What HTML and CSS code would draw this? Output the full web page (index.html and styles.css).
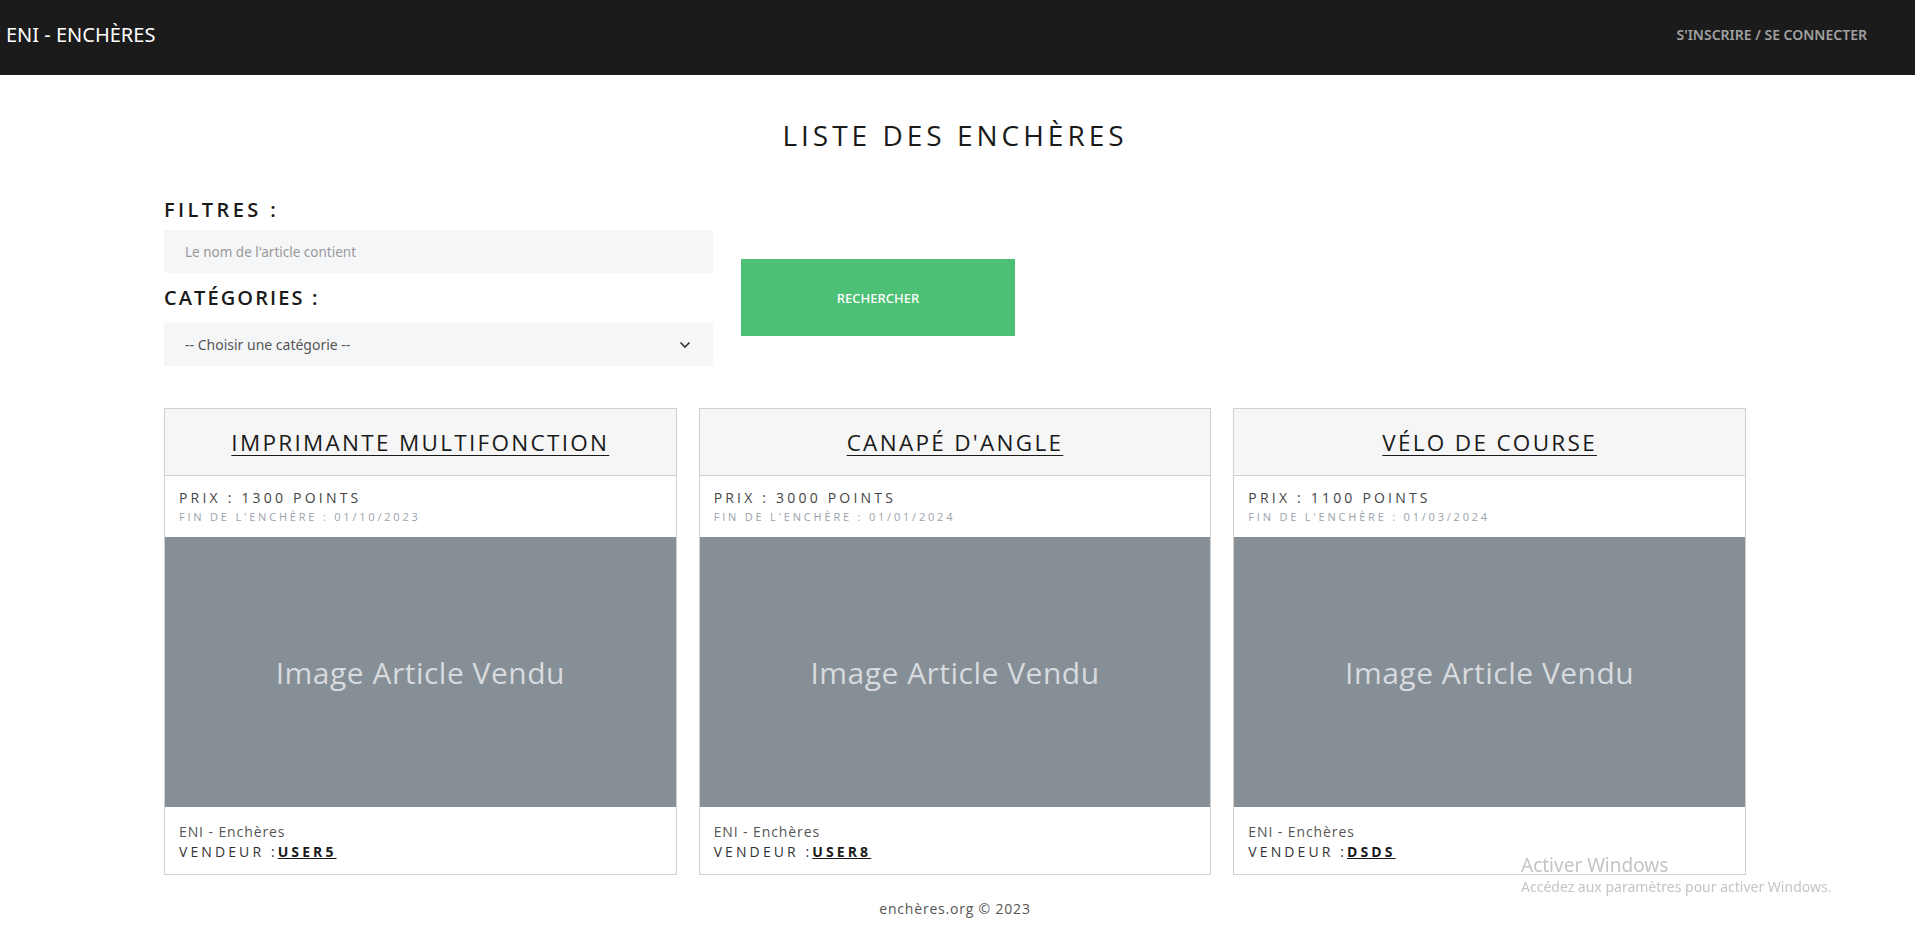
FILE: index.html
```html
<!DOCTYPE html>
<html lang="fr">
<head>
<meta charset="utf-8">
<title>ENI - Enchères</title>
<link rel="stylesheet" href="styles.css">
</head>
<body>
<nav class="navbar">
  <a class="brand" href="#">ENI - ENCHÈRES</a>
  <a class="nav-link" href="#">S'INSCRIRE / SE CONNECTER</a>
</nav>
<main class="container">
  <h1 class="page-title">LISTE DES ENCHÈRES</h1>
  <form class="filters">
    <div class="filter-col">
      <h2 class="filter-label">FILTRES :</h2>
      <div class="field">Le nom de l'article contient</div>
      <h2 class="filter-label cat">CATÉGORIES :</h2>
      <div class="field select">
        <span>-- Choisir une catégorie --</span>
        <svg class="chev" width="12" height="8" viewBox="0 0 12 8"><path d="M1.5 1.5 L6 6 L10.5 1.5" fill="none" stroke="#333" stroke-width="1.6"/></svg>
      </div>
    </div>
    <button class="btn-search" type="button">RECHERCHER</button>
  </form>
  <section class="cards">
    <article class="card">
      <header class="card-head"><a href="#">IMPRIMANTE MULTIFONCTION</a></header>
      <div class="card-info">
        <div class="price">PRIX : 1300 POINTS</div>
        <div class="end">FIN DE L'ENCHÈRE : 01/10/2023</div>
      </div>
      <div class="card-img">Image Article Vendu</div>
      <div class="card-foot">
        <div class="org">ENI - Enchères</div>
        <div class="seller">VENDEUR :<a href="#">USER5</a></div>
      </div>
    </article>
    <article class="card">
      <header class="card-head"><a href="#">CANAPÉ D'ANGLE</a></header>
      <div class="card-info">
        <div class="price">PRIX : 3000 POINTS</div>
        <div class="end">FIN DE L'ENCHÈRE : 01/01/2024</div>
      </div>
      <div class="card-img">Image Article Vendu</div>
      <div class="card-foot">
        <div class="org">ENI - Enchères</div>
        <div class="seller">VENDEUR :<a href="#">USER8</a></div>
      </div>
    </article>
    <article class="card">
      <header class="card-head"><a href="#">VÉLO DE COURSE</a></header>
      <div class="card-info">
        <div class="price">PRIX : 1100 POINTS</div>
        <div class="end">FIN DE L'ENCHÈRE : 01/03/2024</div>
      </div>
      <div class="card-img">Image Article Vendu</div>
      <div class="card-foot">
        <div class="org">ENI - Enchères</div>
        <div class="seller">VENDEUR :<a href="#">DSDS</a></div>
      </div>
    </article>
  </section>
  <footer class="footer">enchères.org © 2023</footer>
</main>
<div class="watermark">
  <div class="wm-title">Activer Windows</div>
  <div class="wm-sub">Accédez aux paramètres pour activer Windows.</div>
</div>
</body>
</html>
```
FILE: styles.css
```css
* { box-sizing: border-box; }
body {
  margin: 0;
  font-family: "Open Sans", "Noto Sans", sans-serif;
  color: #212529;
  background: #fff;
}
.navbar {
  height: 75px;
  background: #1b1b1b;
  display: flex;
  align-items: center;
  justify-content: space-between;
  padding: 0 48px 6px 6px;
}
.brand {
  color: #fff;
  text-decoration: none;
  font-family: "Noto Sans", sans-serif;
  font-size: 20px;
  font-weight: 400;
}
.nav-link {
  color: #a0a0a0;
  text-decoration: none;
  font-family: "Noto Sans", sans-serif;
  font-size: 14px;
  font-weight: 600;
}
.container {
  width: 1582px;
  margin: 0 0 0 164px;
}
.page-title {
  text-align: center;
  font-size: 28px;
  font-weight: 500;
  letter-spacing: 4px;
  margin: 0;
  padding-top: 42px;
  line-height: 36px;
  color: #1a1a1a;
}
.filters {
  display: flex;
  align-items: flex-start;
  margin-top: 43px;
}
.filter-col {
  width: 549px;
  display: flex;
  flex-direction: column;
}
.filter-label {
  margin: 0;
  font-size: 20px;
  font-weight: 600;
  letter-spacing: 3.4px;
  line-height: 28px;
  color: #1a1a1a;
}
.filter-label.cat {
  margin-top: 11px;
  margin-bottom: 11px;
  letter-spacing: 2.1px;
}
.field {
  margin-top: 6px;
  height: 43px;
  background: #f5f6f8;
  padding: 0 21px;
  display: flex;
  align-items: center;
  font-family: "Noto Sans", sans-serif;
  font-size: 13.5px;
  color: #999;
}
.field.select {
  margin-top: 0;
  justify-content: space-between;
  color: #555;
  font-size: 14px;
  padding-right: 22px;
}
.btn-search {
  margin-left: 28px;
  margin-top: 63px;
  width: 274px;
  height: 77px;
  background: #4cc074;
  border: none;
  color: #fff;
  font-family: "Noto Sans", sans-serif;
  font-size: 13px;
  font-weight: 500;
}
.cards {
  display: grid;
  grid-template-columns: repeat(3, 1fr);
  gap: 22px;
  margin-top: 42px;
}
.card {
  border: 1px solid #d0d0d0;
  display: flex;
  flex-direction: column;
}
.card-head {
  height: 67px;
  background: #f6f6f6;
  border-bottom: 1px solid #d0d0d0;
  display: flex;
  align-items: center;
  justify-content: center;
}
.card-head a {
  color: #1a1a1a;
  font-size: 22.5px;
  font-weight: 500;
  letter-spacing: 2.3px;
  text-decoration: underline;
  text-underline-offset: 4px;
  text-decoration-thickness: 1px;
}
.card-info {
  height: 61px;
  padding: 13px 14px 0;
}
.price {
  font-size: 14px;
  letter-spacing: 3.2px;
  color: #444;
  line-height: 18px;
}
.end {
  font-size: 11px;
  letter-spacing: 2.8px;
  color: #9aa2aa;
  line-height: 16px;
  margin-top: 2px;
}
.card-img {
  height: 270px;
  background: #868e96;
  color: #d8dbde;
  font-size: 30px;
  font-weight: 400;
  letter-spacing: 0.5px;
  display: flex;
  align-items: center;
  justify-content: center;
}
.card-foot {
  height: 67px;
  padding: 15px 14px 0;
}
.org {
  font-size: 14px;
  color: #555;
  line-height: 20px;
  letter-spacing: 0.9px;
}
.seller {
  font-size: 14px;
  color: #333;
  letter-spacing: 3.1px;
  line-height: 20px;
  font-weight: 500;
}
.seller a {
  color: #1a1a1a;
  font-weight: 700;
  text-decoration: underline;
}
.footer {
  text-align: center;
  font-size: 14px;
  color: #555;
  letter-spacing: 0.8px;
  margin-top: 24px;
  line-height: 20px;
}
.watermark {
  position: fixed;
  left: 1521px;
  top: 853px;
  color: #c4c4c4;
  font-family: "Noto Sans", sans-serif;
}
.wm-title { font-size: 19px; line-height: 24px; }
.wm-sub { font-size: 14px; line-height: 20px; }
```
